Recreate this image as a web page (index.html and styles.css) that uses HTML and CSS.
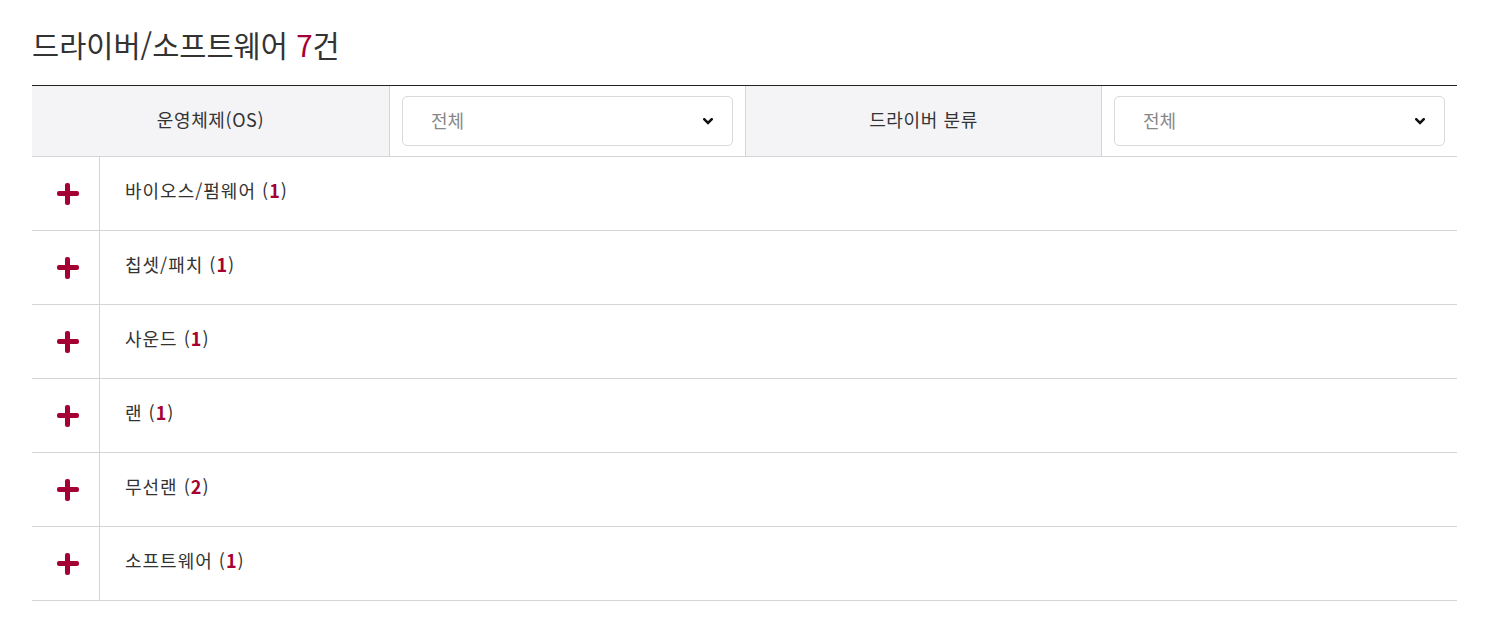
FILE: index.html
```html
<!DOCTYPE html>
<html lang="ko">
<head>
<meta charset="utf-8">
<link rel="stylesheet" href="styles.css">
</head>
<body>
<div class="wrap">
  <h2 class="title">드라이버/소프트웨어 <em>7</em>건</h2>
  <div class="filters">
    <div class="label">운영체제(OS)</div>
    <div class="field">
      <div class="select"><span>전체</span>
        <svg class="chev" viewBox="0 0 10 7" width="10" height="7"><path d="M1.3 1.3 L5 5 L8.7 1.3" fill="none" stroke="#111" stroke-width="2.6" stroke-linecap="square" stroke-linejoin="miter"/></svg>
      </div>
    </div>
    <div class="label">드라이버 분류</div>
    <div class="field">
      <div class="select"><span>전체</span>
        <svg class="chev" viewBox="0 0 10 7" width="10" height="7"><path d="M1.3 1.3 L5 5 L8.7 1.3" fill="none" stroke="#111" stroke-width="2.6" stroke-linecap="square" stroke-linejoin="miter"/></svg>
      </div>
    </div>
  </div>
  <ul class="list">
    <li class="row"><div class="icon"><span class="plus"></span></div><div class="name">바이오스/펌웨어 (<b>1</b>)</div></li>
    <li class="row"><div class="icon"><span class="plus"></span></div><div class="name">칩셋/패치 (<b>1</b>)</div></li>
    <li class="row"><div class="icon"><span class="plus"></span></div><div class="name">사운드 (<b>1</b>)</div></li>
    <li class="row"><div class="icon"><span class="plus"></span></div><div class="name">랜 (<b>1</b>)</div></li>
    <li class="row"><div class="icon"><span class="plus"></span></div><div class="name">무선랜 (<b>2</b>)</div></li>
    <li class="row"><div class="icon"><span class="plus"></span></div><div class="name">소프트웨어 (<b>1</b>)</div></li>
  </ul>
</div>
</body>
</html>
```

FILE: styles.css
```css
* { box-sizing: border-box; }
html, body { margin: 0; padding: 0; background: #fff; }
body {
  font-family: "Noto Sans CJK KR", "Noto Sans", sans-serif;
  color: #333;
}
.wrap {
  padding: 22px 38px 0 32px;
}
.title {
  margin: 0;
  font-size: 29.5px;
  font-weight: 400;
  line-height: 44px;
  color: #333;
}
.title em {
  font-style: normal;
  color: #a50034;
}
.filters {
  margin-top: 19px;
  display: grid;
  grid-template-columns: 358px 356px 356px 355px;
  border-top: 1px solid #222;
  border-bottom: 1px solid #d5d5d5;
  height: 72px;
}
.label {
  background: #f4f4f6;
  display: flex;
  align-items: center;
  justify-content: center;
  font-size: 18px;
  letter-spacing: 0.6px;
  padding-bottom: 4px;
  border-right: 1px solid #d5d5d5;
}
.field {
  display: flex;
  align-items: center;
  padding: 0 12px;
  border-right: 1px solid #d5d5d5;
}
.field:last-child { border-right: 0; }
.select {
  flex: 1;
  height: 50px;
  border: 1px solid #dadada;
  border-radius: 5px;
  display: flex;
  align-items: center;
  justify-content: space-between;
  padding: 0 19px 2px 28px;
  font-size: 18px;
  color: #888;
}
.chev { display: block; margin-top: 2px; }
.list {
  list-style: none;
  margin: 0;
  padding: 0;
}
.row {
  display: flex;
  height: 74px;
  border-bottom: 1px solid #d5d5d5;
}
.icon {
  width: 68px;
  border-right: 1px solid #d5d5d5;
  display: flex;
  align-items: center;
  justify-content: center;
  padding-left: 4px;
}
.plus {
  position: relative;
  width: 22px;
  height: 22px;
}
.plus::before, .plus::after {
  content: "";
  position: absolute;
  background: #a50034;
  border-radius: 2px;
}
.plus::before { left: 0; top: 8.5px; width: 22px; height: 5px; }
.plus::after { top: 0; left: 8.5px; width: 5px; height: 22px; }
.name {
  display: flex;
  align-items: center;
  padding-left: 25px;
  padding-bottom: 7px;
  font-size: 18px;
  letter-spacing: 1px;
  color: #333;
  white-space: pre;
}
.name b {
  color: #a50034;
  font-weight: 700;
}
```
